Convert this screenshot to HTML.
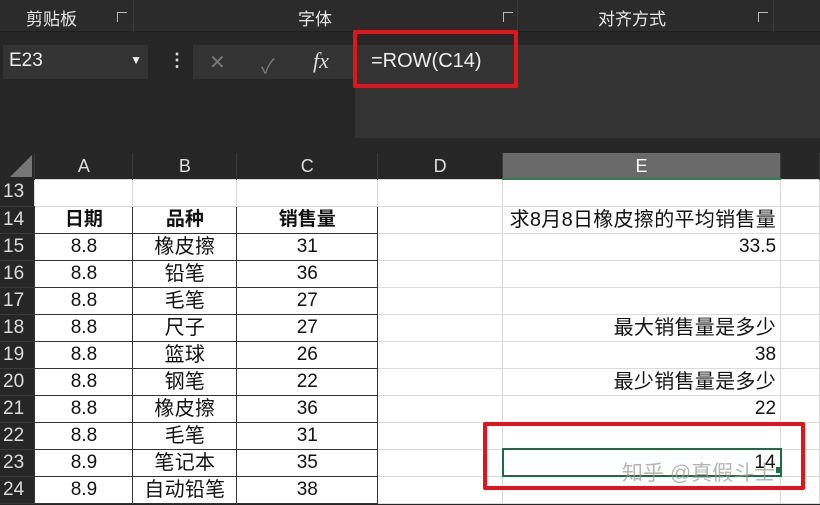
<!DOCTYPE html>
<html><head><meta charset="utf-8"><style>
*{margin:0;padding:0;box-sizing:border-box}
body{width:820px;height:505px;overflow:hidden;background:#262626;font-family:"Liberation Sans","Noto Sans CJK SC",sans-serif;position:relative}
.abs{position:absolute}
.rib{top:0;left:0;width:820px;height:32px;background:#2b2b2b;border-bottom:1px solid #1e1e1e;color:#e8e8e8;font-size:17px}
.rib span{position:absolute;top:5px}
.sep{position:absolute;top:0;width:1px;height:32px;background:#3c3c3c}
.lch{position:absolute;top:12px;width:10px;height:10px;border:1px solid #bbb;border-right:none;border-bottom:none}
table{position:absolute;left:0;top:153px;border-collapse:collapse;table-layout:fixed}
tr{height:27px}
td{height:27px;line-height:20px;font-size:19px;color:#111;background:#fff;border:1px solid #dadada;text-align:center;white-space:nowrap;overflow:visible;padding:0 2px;vertical-align:middle}
tr.h{height:26px}
tr.h td{height:26px;background:#262626;color:#ddd;border:none;border-right:1px solid #3a3a3a;font-size:18px}
td.rh{background:#262626;color:#ddd;border:none;border-bottom:1px solid #3a3a3a;font-size:19px;text-align:left;padding-left:3px}
td.r{text-align:right;padding-right:4px}
td.e{font-size:20px;letter-spacing:0.3px}
td.b{border:1px solid #333}
td.bold{font-weight:bold}
</style></head><body>
<div class="abs rib">
<span style="left:26px">剪贴板</span><div class="lch" style="left:117px"></div>
<div class="sep" style="left:133px"></div>
<span style="left:298px">字体</span><div class="lch" style="left:503px"></div>
<div class="sep" style="left:517px"></div>
<span style="left:598px">对齐方式</span><div class="lch" style="left:758px"></div>
<div class="sep" style="left:773px"></div>
</div>
<div class="abs" style="left:3px;top:45px;width:145px;height:34px;background:#333;color:#eee;font-size:19px;padding:5px 6px">E23<span style="position:absolute;right:6px;top:8px;font-size:12px">▼</span></div>
<div class="abs" style="left:168px;top:50px;color:#ddd;font-size:18px;font-weight:bold">⋮</div>
<div class="abs" style="left:193px;top:45px;width:162px;height:34px;background:#333"></div>
<div class="abs" style="left:209px;top:50px;color:#777;font-size:20px">✕</div>
<div class="abs" style="left:261px;top:50px;color:#777;font-size:20px">✓</div>
<div class="abs" style="left:313px;top:48px;color:#ddd;font-size:22px;font-family:'Liberation Serif',serif;font-style:italic">fx</div>
<div class="abs" style="left:355px;top:45px;width:465px;height:93px;background:#333"></div>
<div class="abs" style="left:371px;top:50px;color:#eee;font-size:20px">=ROW(C14)</div>
<div class="abs" style="left:353px;top:30px;width:165px;height:58px;border:4px solid #e0141a;border-radius:2px"></div>
<table>
<colgroup><col style="width:35px"><col style="width:98px"><col style="width:104px"><col style="width:141px"><col style="width:125px"><col style="width:278px"><col style="width:39px"></colgroup>
<tr class="h"><td style="position:relative"><div style="position:absolute;right:2px;bottom:2px;width:0;height:0;border-left:22px solid transparent;border-bottom:22px solid #777"></div></td><td>A</td><td>B</td><td>C</td><td>D</td><td style="background:#6a6a6a;color:#fff;border-bottom:2px solid #2e7d55">E</td><td></td></tr>
<tr><td class="rh">13</td><td></td><td></td><td></td><td></td><td></td><td></td></tr>
<tr><td class="rh">14</td><td class="b bold">日期</td><td class="b bold">品种</td><td class="b bold">销售量</td><td></td><td class="r e">求8月8日橡皮擦的平均销售量</td><td></td></tr>
<tr><td class="rh">15</td><td class="b">8.8</td><td class="b e">橡皮擦</td><td class="b">31</td><td></td><td class="r">33.5</td><td></td></tr>
<tr><td class="rh">16</td><td class="b">8.8</td><td class="b e">铅笔</td><td class="b">36</td><td></td><td></td><td></td></tr>
<tr><td class="rh">17</td><td class="b">8.8</td><td class="b e">毛笔</td><td class="b">27</td><td></td><td></td><td></td></tr>
<tr><td class="rh">18</td><td class="b">8.8</td><td class="b e">尺子</td><td class="b">27</td><td></td><td class="r e">最大销售量是多少</td><td></td></tr>
<tr><td class="rh">19</td><td class="b">8.8</td><td class="b e">篮球</td><td class="b">26</td><td></td><td class="r">38</td><td></td></tr>
<tr><td class="rh">20</td><td class="b">8.8</td><td class="b e">钢笔</td><td class="b">22</td><td></td><td class="r e">最少销售量是多少</td><td></td></tr>
<tr><td class="rh">21</td><td class="b">8.8</td><td class="b e">橡皮擦</td><td class="b">36</td><td></td><td class="r">22</td><td></td></tr>
<tr><td class="rh">22</td><td class="b">8.8</td><td class="b e">毛笔</td><td class="b">31</td><td></td><td></td><td></td></tr>
<tr><td class="rh">23</td><td class="b">8.9</td><td class="b e">笔记本</td><td class="b">35</td><td></td><td class="r" style="border:2px solid #1e6b45">14</td><td></td></tr>
<tr><td class="rh">24</td><td class="b">8.9</td><td class="b e">自动铅笔</td><td class="b">38</td><td></td><td></td><td></td></tr>
</table>
<div class="abs" style="left:483px;top:422px;width:322px;height:68px;border:4px solid #e0141a;border-radius:2px"></div>
<div class="abs" style="left:776px;top:467px;width:6px;height:6px;background:#1e6b45"></div>
<div class="abs" style="left:622px;top:457px;color:rgba(150,150,150,0.7);font-size:21px">知乎 @真假斗士</div>
</body></html>
